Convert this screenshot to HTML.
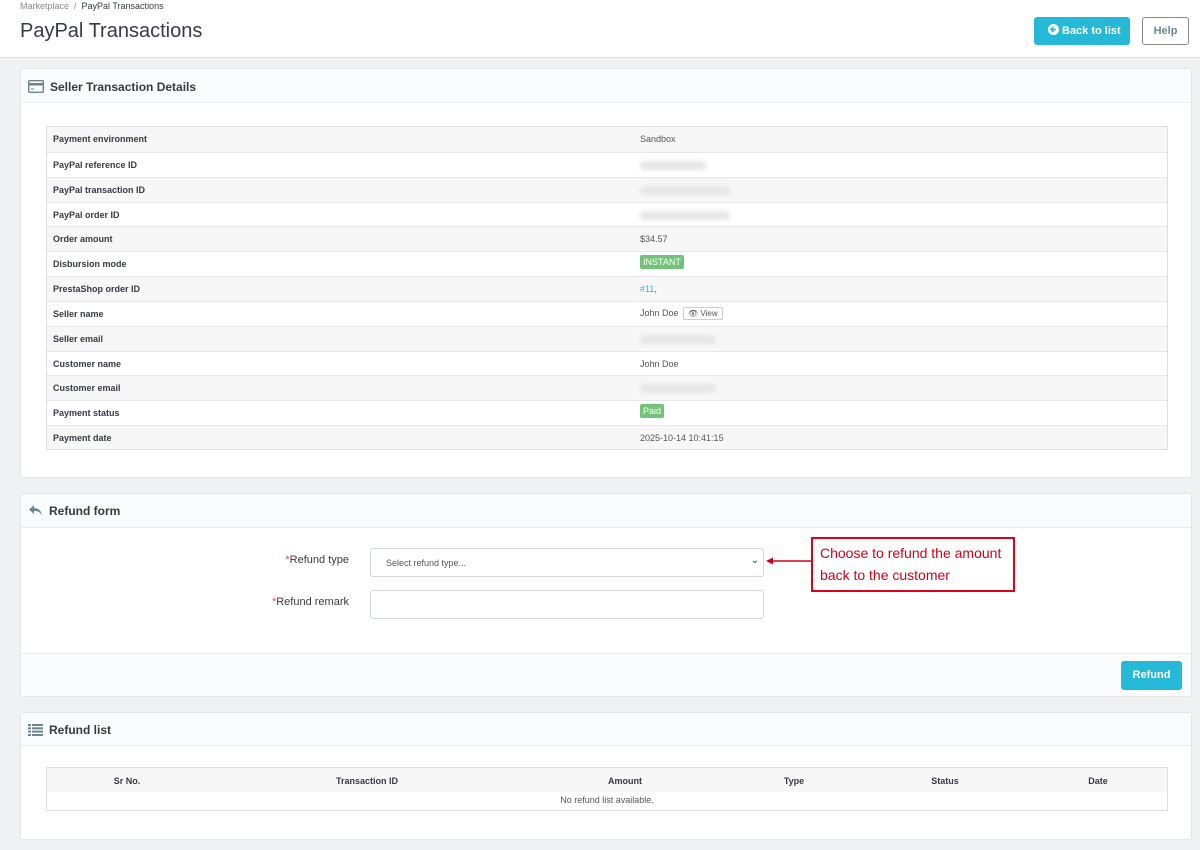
<!DOCTYPE html>
<html><head><meta charset="utf-8"><style>
*{box-sizing:border-box;margin:0;padding:0}
body{width:1200px;height:850px;background:#eff1f2;font-family:"Liberation Sans",sans-serif;color:#363a41;position:relative;overflow:hidden}
.a{position:absolute}
.top{left:0;top:0;width:1200px;height:58px;background:#fff;border-bottom:1px solid #dbe0e3}
.panel{background:#fff;border:1px solid #e3e6e8;border-radius:3px}
.ph{left:0;top:0;right:0;background:#fafbfc;border-bottom:1px solid #e8ebed;font-size:12px;font-weight:bold;color:#363a41}
.row{left:0;width:1120px;height:25px;font-size:9px;border-top:1px solid #e8e8e8}
.row b{position:absolute;left:6px;top:7px}
.v{position:absolute;left:593px;top:7px;color:#555}
.g{background:#f7f7f7}
.blur{position:absolute;left:593px;top:8px;height:9px;background:#e6e6e6;border-radius:4px;filter:blur(2px)}
.badge{background:#72c279;color:#fff;padding:2px 3px;border-radius:2px;font-size:9px}
.lab{font-size:11px;color:#363a41;text-align:right;width:200px}
.lab i{color:#e34c4c;font-style:normal}
.inp{border:1px solid #d3d8db;border-radius:3px;background:#fff}
.th{position:absolute;top:8px;font-size:9px;font-weight:bold;transform:translateX(-50%)}
</style></head><body>
<div class="a top"></div>
<div class="a" style="left:20px;top:1px;font-size:9px;color:#8a8a8a">Marketplace &nbsp;/ &nbsp;<span style="color:#363a41">PayPal Transactions</span></div>
<div class="a" style="left:20px;top:20px;font-size:20px;color:#363a41">PayPal Transactions</div>
<div class="a" style="left:1034px;top:17px;width:96px;height:28px;background:#25b9d7;border-radius:3px;color:#fff;font-size:11px;font-weight:bold;line-height:28px;padding-left:14px">
<svg width="11" height="11" viewBox="0 0 11 11" style="vertical-align:-1px;margin-right:3px"><circle cx="5.5" cy="5.5" r="5.5" fill="#fff"/><path d="M8 5.5H3.5M5.5 3L3 5.5 5.5 8" stroke="#25b9d7" stroke-width="1.6" fill="none"/></svg>Back to list</div>
<div class="a" style="left:1142px;top:17px;width:47px;height:28px;border:1px solid #8a8a8a;border-radius:3px;color:#6c868e;font-size:11px;font-weight:bold;line-height:26px;text-align:center;background:#fff">Help</div>

<div class="a panel" style="left:20px;top:68px;width:1172px;height:410px">
<div class="a ph" style="height:34px;padding:11px 0 0 29px">Seller Transaction Details</div>
<svg class="a" style="left:7px;top:11px" width="16" height="13" viewBox="0 0 16 13"><rect x="0.7" y="0.7" width="14.6" height="11.6" rx="1" fill="none" stroke="#6c868e" stroke-width="1.4"/><rect x="1" y="3" width="14" height="2.5" fill="#6c868e"/><rect x="3" y="8.5" width="3" height="1" fill="#6c868e"/></svg>
<div class="a" style="left:25px;top:57px;width:1122px;height:324px;border:1px solid #ddd;overflow:hidden">
<div class="a row g" style="top:0;border-top:none"><b>Payment environment</b><span class="v">Sandbox</span></div>
<div class="a row" style="top:24.8px"><b>PayPal reference ID</b><div class="blur" style="width:66px"></div></div>
<div class="a row g" style="top:49.7px"><b>PayPal transaction ID</b><div class="blur" style="width:90px"></div></div>
<div class="a row" style="top:74.5px"><b>PayPal order ID</b><div class="blur" style="width:90px"></div></div>
<div class="a row g" style="top:99.3px"><b>Order amount</b><span class="v">$34.57</span></div>
<div class="a row" style="top:124.2px"><b>Disbursion mode</b><span class="v" style="top:5px"><span class="badge">INSTANT</span></span></div>
<div class="a row g" style="top:149px"><b>PrestaShop order ID</b><span class="v" style="color:#25b9d7">#11<span style="color:#555">,</span></span></div>
<div class="a row" style="top:173.8px"><b>Seller name</b><span class="v" style="top:5px">John Doe <span style="display:inline-block;border:1px solid #ccc;border-radius:2px;padding:1px 4px;font-size:8px;margin-left:2px">&#128065; View</span></span></div>
<div class="a row g" style="top:198.7px"><b>Seller email</b><div class="blur" style="width:76px"></div></div>
<div class="a row" style="top:223.5px"><b>Customer name</b><span class="v">John Doe</span></div>
<div class="a row g" style="top:248.3px"><b>Customer email</b><div class="blur" style="width:76px"></div></div>
<div class="a row" style="top:273.2px"><b>Payment status</b><span class="v" style="top:5px"><span class="badge">Paid</span></span></div>
<div class="a row g" style="top:298px"><b>Payment date</b><span class="v">2025-10-14 10:41:15</span></div>
</div>
</div>

<div class="a panel" style="left:20px;top:493px;width:1172px;height:204px;overflow:hidden">
<div class="a ph" style="height:34px;padding:10px 0 0 28px">Refund form</div>
<svg class="a" style="left:7px;top:10px" width="15" height="13" viewBox="0 0 15 13"><path d="M6 1 L1 5.5 L6 10 V7 C10 7 12.5 8 14 12 C13.5 7 11 4.2 6 4 Z" fill="#6c868e"/></svg>
<div class="a lab" style="left:128px;top:60px"><i>*</i>Refund type</div>
<div class="a inp" style="left:349px;top:54px;width:394px;height:29px;font-size:9px;color:#555;padding:9px 0 0 15px">Select refund type...<span style="position:absolute;right:4px;top:6px;font-size:10px;color:#333">&#8964;</span></div>
<div class="a lab" style="left:128px;top:102px"><i>*</i>Refund remark</div>
<div class="a inp" style="left:349px;top:96px;width:394px;height:29px"></div>
<div class="a" style="left:0;top:159px;width:1170px;height:44px;background:#fafbfc;border-top:1px solid #e8ebed"></div>
<div class="a" style="left:1100px;top:167px;width:61px;height:29px;background:#25b9d7;border-radius:3px;color:#fff;font-size:11px;font-weight:bold;text-align:center;line-height:29px">Refund</div>
</div>

<svg class="a" style="left:765px;top:555px" width="48" height="12"><path d="M6 6 H46" stroke="#d0021b" stroke-width="1.5"/><path d="M1 6 L8 2.5 V9.5Z" fill="#d0021b"/></svg>
<div class="a" style="left:811px;top:537px;width:204px;height:55px;border:2px solid #e0001b;background:#fff;color:#d0021b;font-size:14px;line-height:22px;padding:3px 0 0 7px">Choose to refund the amount back to the customer</div>

<div class="a panel" style="left:20px;top:712px;width:1172px;height:128px">
<div class="a ph" style="height:33px;padding:10px 0 0 28px">Refund list</div>
<svg class="a" style="left:7px;top:11px" width="15" height="12" viewBox="0 0 15 12"><g fill="#6c868e"><rect x="0" y="0" width="3" height="2"/><rect x="4" y="0" width="11" height="2"/><rect x="0" y="3.3" width="3" height="2"/><rect x="4" y="3.3" width="11" height="2"/><rect x="0" y="6.6" width="3" height="2"/><rect x="4" y="6.6" width="11" height="2"/><rect x="0" y="10" width="3" height="2"/><rect x="4" y="10" width="11" height="2"/></g></svg>
<div class="a" style="left:25px;top:54px;width:1122px;height:44px;border:1px solid #ddd">
<div class="a" style="left:0;top:0;width:1120px;height:24px;background:#f7f7f7"></div>
<div class="th" style="left:80px">Sr No.</div>
<div class="th" style="left:320px">Transaction ID</div>
<div class="th" style="left:578px">Amount</div>
<div class="th" style="left:747px">Type</div>
<div class="th" style="left:898px">Status</div>
<div class="th" style="left:1051px">Date</div>
<div class="a" style="left:0;top:27px;width:1120px;text-align:center;font-size:9px;color:#555">No refund list available.</div>
</div>
</div>
</body></html>
